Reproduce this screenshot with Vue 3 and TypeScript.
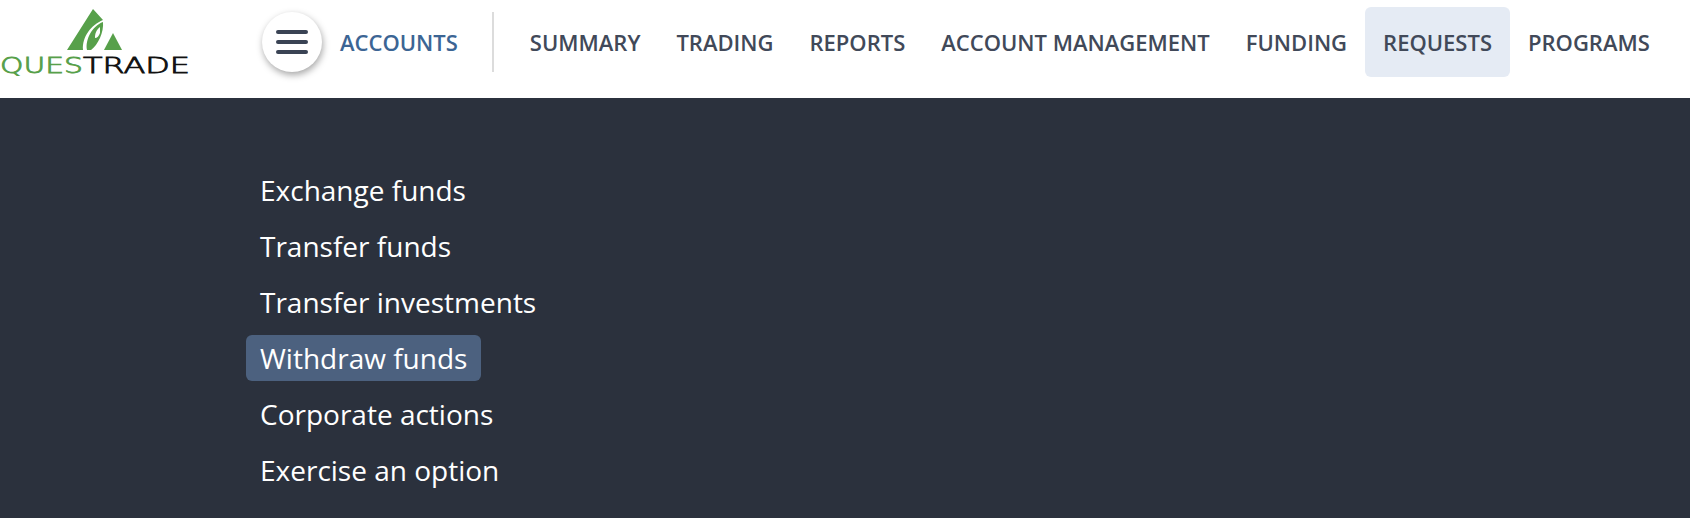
<script setup lang="ts">
const links = ['SUMMARY', 'TRADING', 'REPORTS', 'ACCOUNT MANAGEMENT', 'FUNDING', 'REQUESTS', 'PROGRAMS']
const activeLink = 'REQUESTS'
const menuItems = [
  'Exchange funds',
  'Transfer funds',
  'Transfer investments',
  'Withdraw funds',
  'Corporate actions',
  'Exercise an option',
]
const activeItem = 'Withdraw funds'
</script>

<template>
  <div class="page">
    <header class="topbar">
      <a class="logo" aria-label="Questrade">
        <svg width="190" height="80" viewBox="0 0 190 80">
          <path class="leaf" d="M67 50 L93 9 L103 20 C91 25 82 37 83 50 Z" />
          <path class="leaf" fill-rule="evenodd" d="M87 50 C85 40 92 26 103 22 C104 32 98 45 91 50 Z M100 27 C96 30 95 34 95 38 C97 38 99 36 100 33 Z" />
          <path class="leaf" d="M104 50 L113 33 L122 50 Z" />
          <text x="0" y="73" class="word green" textLength="83" lengthAdjust="spacingAndGlyphs">QUES</text>
          <text x="83" y="73" class="word dark" textLength="107" lengthAdjust="spacingAndGlyphs">TRADE</text>
        </svg>
      </a>
      <button class="burger" aria-label="Menu">
        <span></span><span></span><span></span>
      </button>
      <a class="accounts">ACCOUNTS</a>
      <div class="divider"></div>
      <nav class="nav">
        <a v-for="link in links" :key="link" class="nav-link" :class="{ active: link === activeLink }">{{ link }}</a>
      </nav>
    </header>
    <main class="panel">
      <ul class="menu">
        <li v-for="item in menuItems" :key="item">
          <a class="menu-item" :class="{ active: item === activeItem }">{{ item }}</a>
        </li>
      </ul>
    </main>
  </div>
</template>

<style>
html, body { margin: 0; background: #2b313d; }
</style>

<style scoped>
.page {
  height: 518px;
  overflow: hidden;
  display: flex;
  flex-direction: column;
  font-family: "Open Sans", "Noto Sans", sans-serif;
}

.topbar {
  height: 98px;
  background: #fff;
  display: flex;
  align-items: center;
  flex-shrink: 0;
}

.logo {
  width: 190px;
  height: 80px;
  margin-right: 72px;
  align-self: flex-start;
}
.logo svg { display: block; }
.leaf { fill: #57a04a; }
.word {
  font-family: "DejaVu Sans", sans-serif;
  font-size: 21px;
  font-weight: 200;
  stroke-width: 0.8px;
}
.green { fill: #57a04a; stroke: #57a04a; }
.dark { fill: #111; stroke: #111; }

.burger {
  width: 60px;
  height: 60px;
  margin-top: -14px;
  padding: 0;
  border: 0;
  border-radius: 50%;
  background: #fff;
  box-shadow: 1px 3px 7px rgba(0, 0, 0, 0.35);
  display: flex;
  flex-direction: column;
  align-items: center;
  justify-content: center;
  gap: 6px;
}
.burger span {
  width: 32px;
  height: 4px;
  border-radius: 2px;
  background: #3a4354;
}

.accounts {
  margin: -14px 34px 0 18px;
  font-size: 22px;
  font-weight: 600;
  color: #3c6594;
}

.divider {
  width: 2px;
  height: 60px;
  margin-top: -14px;
  background: #dcdcdc;
}

.nav {
  display: flex;
  align-items: center;
  margin-top: -14px;
  margin-left: 18px;
}
.nav-link {
  height: 70px;
  padding: 0 18px;
  display: flex;
  align-items: center;
  border-radius: 6px;
  font-size: 22px;
  font-weight: 600;
  color: #414959;
  white-space: nowrap;
}
.nav-link.active { background: #e5ebf4; }

.panel {
  flex: 1;
  background: #2b313d;
  padding: 69px 0 0 246px;
}
.menu {
  list-style: none;
  margin: 0;
  padding: 0;
  display: flex;
  flex-direction: column;
  gap: 10px;
  align-items: flex-start;
}
.menu-item {
  display: block;
  height: 46px;
  line-height: 46px;
  padding: 0 14px;
  border-radius: 6px;
  font-size: 28px;
  color: #fff;
  white-space: nowrap;
}
.menu-item.active { background: #4c617f; }
</style>
